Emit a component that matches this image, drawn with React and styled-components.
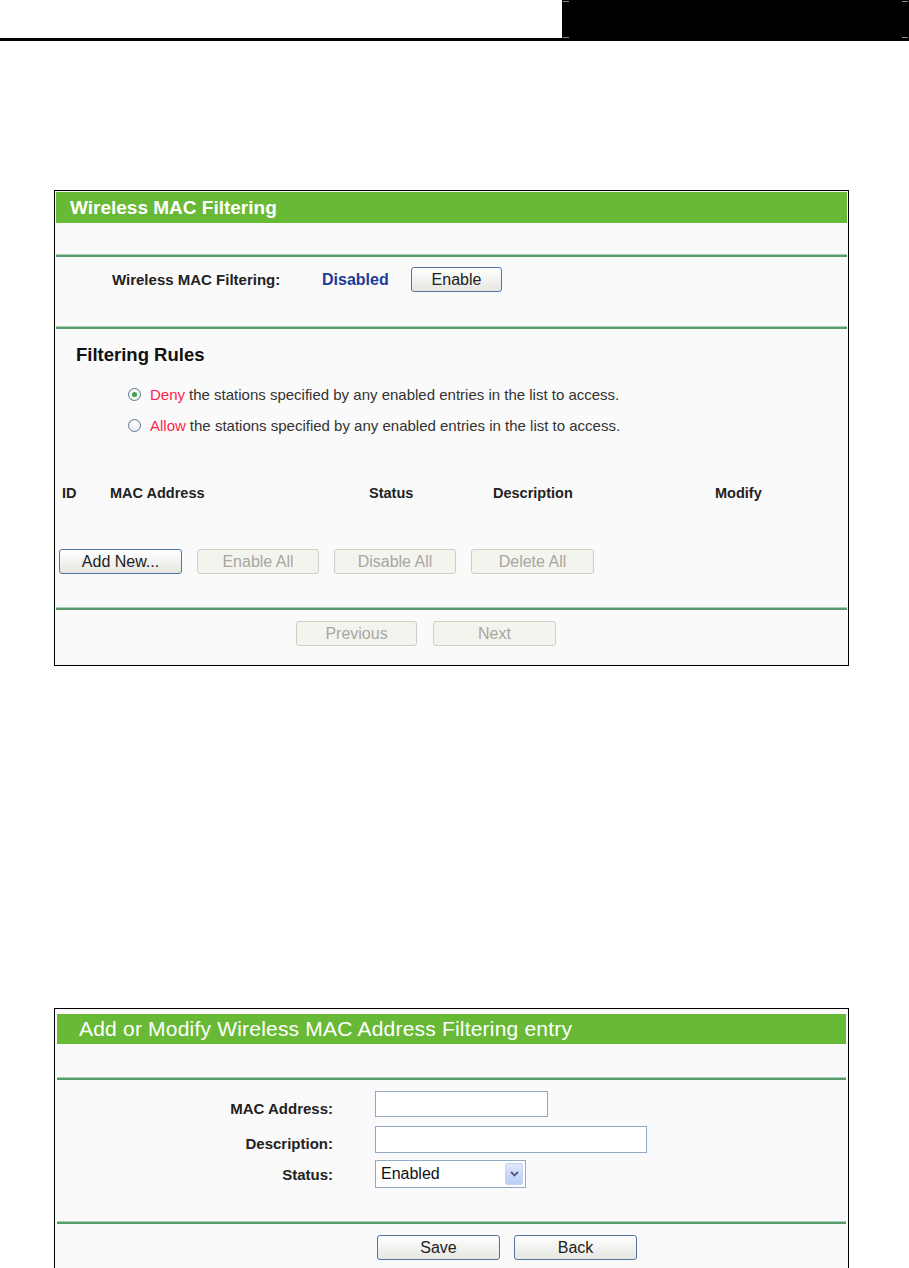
import React from "react";
import styled, { createGlobalStyle } from "styled-components";

const Global = createGlobalStyle`
  html, body { margin: 0; padding: 0; background: #ffffff; }
  body { font-family: "Liberation Sans", Arial, sans-serif; color: #222; }
  * { box-sizing: border-box; }
`;

const Page = styled.div`
  width: 909px;
  height: 1268px;
  overflow: hidden;
`;

const TopBar = styled.div`
  height: 41px;
  display: flex;
  justify-content: flex-end;
  border-bottom: 3px solid #000;
`;

const TitleBox = styled.div`
  position: relative;
  width: 347px;
  height: 38px;
  background: #000;
`;

const Tick = styled.span`
  position: absolute;
  width: 6px;
  height: 1px;
  background: #888;
  ${(p) => (p.$top ? "top: 1px;" : "bottom: 0;")}
  ${(p) => (p.$left ? "left: 1px;" : "right: 1px;")}
`;

const Panel = styled.section`
  margin-left: 54px;
  margin-top: ${(p) => p.$mt}px;
  width: 795px;
  border: 1px solid #000;
  background: #fafafa;
  padding: ${(p) => p.$pad};
`;

const PanelHead = styled.div`
  height: ${(p) => p.$h}px;
  background: #68ba36;
  color: #fff;
  font-size: ${(p) => p.$size}px;
  font-weight: ${(p) => p.$weight};
  display: flex;
  align-items: center;
  padding-left: ${(p) => p.$pl}px;
  letter-spacing: ${(p) => p.$ls || 0}px;
`;

const Blank = styled.div`
  height: ${(p) => p.$h}px;
`;

const Divider = styled.div`
  height: 3px;
  border-top: 1px solid #a8d0b2;
  background: #5a9a6e;
`;

const StatusRow = styled.div`
  height: 69px;
  padding: 10px 0 0 56px;
  display: flex;
  align-items: flex-start;
`;

const StatusLabel = styled.div`
  width: 210px;
  height: 25px;
  line-height: 25px;
  font-weight: bold;
  font-size: 15px;
  color: #222;
`;

const StatusValue = styled.div`
  width: 89px;
  height: 25px;
  line-height: 25px;
  font-weight: bold;
  font-size: 16px;
  color: #1d3a9a;
`;

const Btn = styled.button`
  width: ${(p) => p.$w || 122}px;
  height: 25px;
  padding: 0;
  font-family: "Liberation Sans", Arial, sans-serif;
  font-size: 16px;
  border-radius: 3px;
  border: 1px solid ${(p) => (p.disabled ? "#cfcfc6" : "#4f74a0")};
  background: ${(p) =>
    p.disabled ? "#f4f4ef" : "linear-gradient(#ffffff, #f2f2f0 50%, #e6e6e2)"};
  color: ${(p) => (p.disabled ? "#a7a79f" : "#222")};
`;

const Rules = styled.div`
  padding: 16px 0 0 0;
`;

const RulesTitle = styled.div`
  padding-left: 20px;
  height: 20px;
  line-height: 20px;
  font-size: 18.5px;
  font-weight: bold;
  color: #111;
  margin-bottom: 14px;
`;

const RadioRow = styled.label`
  height: 31px;
  display: flex;
  align-items: center;
  padding-left: 72px;
  font-size: 15px;
  color: #333;
`;

const RadioDot = styled.span`
  width: 13px;
  height: 13px;
  border-radius: 50%;
  border: 1px solid #5e7891;
  background: radial-gradient(circle at 50% 40%, #ffffff, #e4e8ec);
  margin-right: 9px;
  display: flex;
  align-items: center;
  justify-content: center;
  &::after {
    content: "";
    width: 5px;
    height: 5px;
    border-radius: 50%;
    background: ${(p) => (p.$checked ? "#3aa24a" : "transparent")};
  }
`;

const Red = styled.span`
  color: #ff1f4b;
  margin-right: 4px;
`;

const TableHead = styled.div`
  margin-top: 42px;
  height: 20px;
  display: grid;
  grid-template-columns: 48px 259px 124px 222px 1fr;
  padding-left: 6px;
  align-items: center;
  font-weight: bold;
  font-size: 14.5px;
  color: #222;
`;

const ButtonRow = styled.div`
  margin-top: 46px;
  height: 25px;
  display: flex;
  gap: 15px;
  padding-left: 3px;
  margin-bottom: 33px;
`;

const Footer = styled.div`
  padding: ${(p) => p.$pt}px 0 0 ${(p) => p.$pl}px;
  height: ${(p) => p.$h}px;
  display: flex;
  gap: ${(p) => p.$gap}px;
`;

const Form = styled.div`
  padding: 11px 0 33px 0;
  display: grid;
  grid-template-columns: 276px auto;
  column-gap: 42px;
  align-items: center;
`;

const Label = styled.div`
  text-align: right;
  font-weight: bold;
  font-size: 15px;
  color: #222;
`;

const Field = styled.div`
  margin-bottom: ${(p) => p.$mb || 0}px;
`;

const TextInput = styled.input`
  display: block;
  width: ${(p) => p.$w}px;
  height: ${(p) => p.$h}px;
  border: 1px solid #90a9c4;
  background: #fff;
`;

const Select = styled.div`
  width: 151px;
  height: 28px;
  border: 1px solid #90a9c4;
  background: #fff;
  display: flex;
  align-items: center;
  justify-content: space-between;
  padding: 0 2px 0 5px;
  font-size: 16px;
  color: #111;
`;

const SelectArrow = styled.span`
  width: 18px;
  height: 22px;
  background: linear-gradient(#dfe8fb, #bccdf5);
  border: 1px solid #c4d3f3;
  border-radius: 2px;
  display: flex;
  align-items: center;
  justify-content: center;
`;

export default function App() {
  return (
    <Page>
      <Global />
      <TopBar>
        <TitleBox>
          <Tick $top $left />
          <Tick $top />
          <Tick $left />
          <Tick />
        </TitleBox>
      </TopBar>

      <Panel $mt={149} $pad="1px 1px 0 1px">
        <PanelHead $h={31} $size={19} $weight="bold" $pl={14}>
          Wireless MAC Filtering
        </PanelHead>
        <Blank $h={31} />
        <Divider />
        <StatusRow>
          <StatusLabel>Wireless MAC Filtering:</StatusLabel>
          <StatusValue>Disabled</StatusValue>
          <Btn $w={91}>Enable</Btn>
        </StatusRow>
        <Divider />
        <Rules>
          <RulesTitle>Filtering Rules</RulesTitle>
          <RadioRow>
            <RadioDot $checked />
            <Red>Deny</Red>the stations specified by any enabled entries in the list to access.
          </RadioRow>
          <RadioRow>
            <RadioDot />
            <Red>Allow</Red>the stations specified by any enabled entries in the list to access.
          </RadioRow>
          <TableHead>
            <span>ID</span>
            <span>MAC Address</span>
            <span>Status</span>
            <span>Description</span>
            <span>Modify</span>
          </TableHead>
          <ButtonRow>
            <Btn $w={123}>Add New...</Btn>
            <Btn $w={122} disabled>Enable All</Btn>
            <Btn $w={122} disabled>Disable All</Btn>
            <Btn $w={123} disabled>Delete All</Btn>
          </ButtonRow>
        </Rules>
        <Divider />
        <Footer $pt={11} $pl={240} $h={55} $gap={16}>
          <Btn $w={121} disabled>Previous</Btn>
          <Btn $w={123} disabled>Next</Btn>
        </Footer>
      </Panel>

      <Panel $mt={342} $pad="5px 2px 0 2px">
        <PanelHead $h={30} $size={21} $weight="normal" $pl={22} $ls={0.2}>
          Add or Modify Wireless MAC Address Filtering entry
        </PanelHead>
        <Blank $h={33} />
        <Divider />
        <Form>
          <Label>MAC Address:</Label>
          <Field $mb={9}>
            <TextInput $w={173} $h={26} />
          </Field>
          <Label>Description:</Label>
          <Field $mb={7}>
            <TextInput $w={272} $h={27} />
          </Field>
          <Label>Status:</Label>
          <Field>
            <Select>
              Enabled
              <SelectArrow>
                <svg width="9" height="6" viewBox="0 0 9 6">
                  <path d="M1 1 L4.5 4.5 L8 1" stroke="#4d6185" strokeWidth="1.8" fill="none" />
                </svg>
              </SelectArrow>
            </Select>
          </Field>
        </Form>
        <Divider />
        <Footer $pt={11} $pl={320} $h={44} $gap={14}>
          <Btn $w={123}>Save</Btn>
          <Btn $w={123}>Back</Btn>
        </Footer>
      </Panel>
    </Page>
  );
}
